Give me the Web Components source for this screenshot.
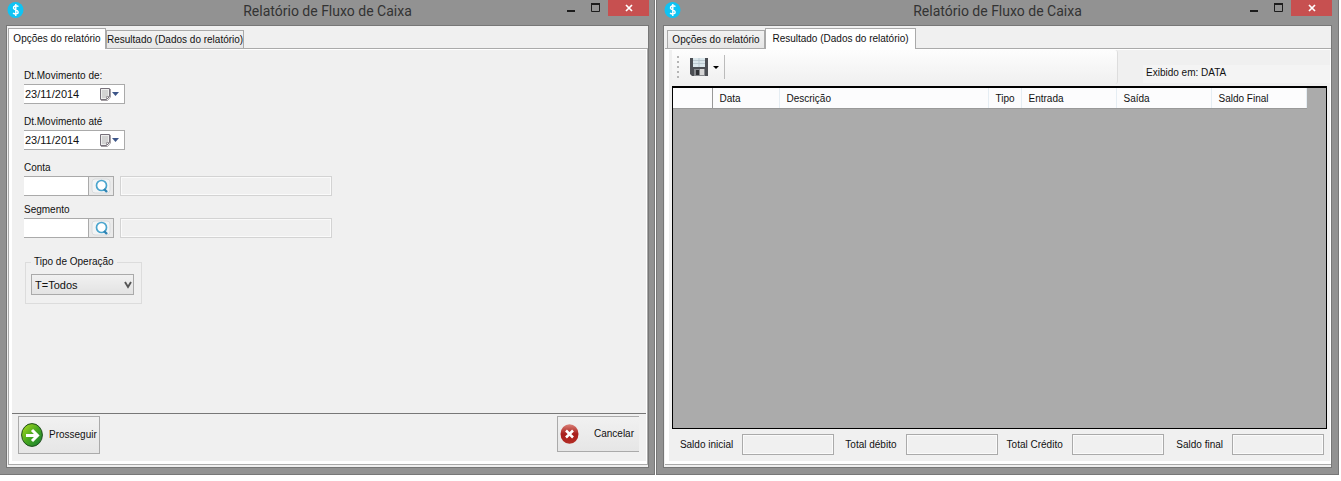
<!DOCTYPE html>
<html lang="pt-BR">
<head>
<meta charset="utf-8">
<title>Relatório de Fluxo de Caixa</title>
<style>
  body {
    margin: 0; height: 100vh; box-sizing: border-box; padding: 0 2px 6px 0;
    display: grid; grid-template-columns: 655fr 683fr; gap: 1px; background: #fff; color: #111;
    font: 10px/14px "Liberation Sans", Arial, sans-serif;
  }
</style>
</head>
<body>
<app-window class="options" caption="Relatório de Fluxo de Caixa"><options-page></options-page></app-window>
<app-window class="result" caption="Relatório de Fluxo de Caixa"><result-page></result-page></app-window>

<script>
const base = `*{box-sizing:border-box} button,input,select{font:inherit;color:inherit;margin:0;border-radius:0;outline:0}`;
const define = (name, render) => customElements.define(name, class extends HTMLElement {
  constructor() { super(); this.attachShadow({ mode: 'open' }); }
  connectedCallback() {
    const t = document.createElement('template');
    t.innerHTML = `<style>${base}</style>` + render(this);
    this.shadowRoot.replaceChildren(t.content.cloneNode(true));
  }
});

/* Window frame with caption bar */
define('app-window', el => `
<style>
  :host{box-sizing:border-box;display:flex;flex-direction:column;min-width:0;background:#929292;border-right:1px solid #777;border-bottom:1px solid #777;padding:0 5px 6px 6px}
  :host(.result){border-left:1px solid #777;padding-right:6px}
  header{display:grid;grid-template-columns:1fr auto 1fr;height:25px;flex:none}
  .logo{display:block;width:18px;height:20px}
  h1{margin:0;font:400 14px/22px Roboto,"Open Sans",sans-serif;color:#333;white-space:nowrap}
  .controls{display:flex;justify-content:flex-end;height:16px}
  .controls button{width:25px;height:16px;border:0;padding:0;background:none;display:grid;place-items:center}
  .controls .close{width:41px;background:#c75050}
  main{flex:1;min-height:0;display:flex;border:1px solid #777;background:#f0f0f0}
  ::slotted(*){flex:1}
</style>
<header>
  <svg class="logo" viewBox="0 0 18 20"><circle cx="9.500" cy="10" r="8" fill="#0fc3f3"/><path d="M12.500 6.500C10 5 7 6 7.500 8.200c.5 1.800 4.500 1.500 4.700 3.800.2 2-3 2.700-5.200 1.200M9.800 4v12" fill="none" stroke="#fff" stroke-width="1.400"/></svg>
  <h1>${el.getAttribute('caption')}</h1>
  <div class="controls">
    <button aria-label="Minimizar"><svg width="10" height="12"><path d="M1 8h8v2H1z" fill="#1c1c1c"/></svg></button>
    <button aria-label="Maximizar"><svg width="10" height="12"><path d="M.5 2v7.500h8V2z" fill="none" stroke="#1c1c1c"/><path d="M0 1h9v2H0z" fill="#1c1c1c"/></svg></button>
    <button class="close" aria-label="Fechar"><svg width="8" height="8"><path d="M1 1l6 6M7 1L1 7" stroke="#fff" stroke-width="1.700"/></svg></button>
  </div>
</header>
<main><slot></slot></main>`);

/* Tab strip over a bordered page */
define('tab-view', el => {
  const active = +el.getAttribute('active');
  return `
<style>
  :host{display:flex;flex-direction:column;min-width:0;padding:2px 0 2px 1px}
  nav{display:flex;align-items:flex-end;height:20px;flex:none;padding-left:${active ? 2 : 0}px}
  button{height:18px;padding:0;border:1px solid #aaa;border-bottom:0;background:linear-gradient(#f2f2f2,#e6e6e6);line-height:18px;white-space:nowrap;width:98px;text-align:center}
  button:nth-child(2){width:138px}
  button.on{height:21px;background:#fff;margin-bottom:-1px;z-index:1}
  button.on:nth-child(2){width:151px}
  section{flex:1;min-height:0;display:flex;border:1px solid #aaa;background:#fff;padding:1px 1px 3px 3px}
  :host([active="1"]) section{border-left:0;border-right:0;padding-left:4px}
  .page{flex:1;min-width:0;display:flex;background:#f0f0f0}
  ::slotted(*){flex:1;min-width:0}
</style>
<nav role="tablist">${['Opções do relatório', 'Resultado (Dados do relatório)'].map((t, i) =>
  `<button role="tab" aria-selected="${i === active}" class="${i === active ? 'on' : ''}">${t}</button>`).join('')}</nav>
<section><div class="page"><slot></slot></div></section>`;
});

/* Date box with calendar drop-down */
define('date-field', el => `
<style>
  :host{display:block}
  label{display:block;white-space:nowrap;line-height:16px}
  .box{display:flex;width:101px;height:20px;border:1px solid #aaa;border-left:0;background:#fff}
  input{flex:1;min-width:0;border:0;padding:0 0 0 1px;background:none;font-size:11px}
  button{width:26px;border:0;padding:0;background:none;display:flex;align-items:center}
</style>
<label for="d">${el.getAttribute('label')}</label>
<div class="box"><input id="d" value="${el.getAttribute('value')}">
<button aria-label="Abrir calendário"><svg width="26" height="14"><path d="M2.500 1.500h9v8l-3 3h-6z" fill="#eee" stroke="#77717a"/><path d="M4 4h6M4 6h6M4 8h6M4 10h4M5 3v8M7 3v8M9 3v6" stroke="#bbb" stroke-width=".6"/><path d="M11.500 9.500h-3v3M12.500 2v8l-3 3.500H3" fill="none" stroke="#8b858c" stroke-width=".8"/><path d="M14 5h7l-3.500 4z" fill="#3d5689"/></svg></button></div>`);

/* Code box, search button and read-only description */
define('lookup-field', el => `
<style>
  :host{display:block}
  label{display:block;line-height:16px}
  .row{display:flex;height:20px}
  .code{width:64px;border:1px solid #aaa;border-width:1px 0;background:#fff;padding:0 2px}
  button{width:26px;padding:0;border:1px solid #aaa;background:#eaeaea;display:grid;place-items:center}
  .desc{width:212px;margin-left:6px;border:1px solid #d3d3d3;box-shadow:inset 0 0 0 1px #fafafa;background:#f0f0f0}
</style>
<label for="c">${el.getAttribute('label')}</label>
<div class="row"><input class="code" id="c">
<button aria-label="Pesquisar"><svg width="20" height="16"><rect x="1" y="1" width="18" height="14" rx="3" fill="#f2f4f5" stroke="#d9dcde"/><circle cx="10.500" cy="7.500" r="5" fill="#fff" stroke="#4aa5ce" stroke-width="1.700"/><path d="M13 11l3 3" stroke="#2f83b3" stroke-width="2.400"/></svg></button>
<input class="desc" readonly aria-label="Descrição"></div>`);

define('operation-group', () => `
<style>
  :host{display:block}
  fieldset{width:117px;height:49px;margin:0;padding:5px 5px 0;border:1px solid #dcdcdc;min-width:0}
  legend{padding:0 3px;white-space:nowrap}
  .pick{display:grid}
  select,svg{grid-area:1/1}
  select{appearance:none;width:103px;height:21px;padding:0 3px;border:1px solid #aaa;background:linear-gradient(#f1f1f1,#e3e3e3);font-size:11px}
  svg{justify-self:end;align-self:center;margin-right:4px;pointer-events:none}
</style>
<fieldset><legend>Tipo de Operação</legend>
<div class="pick"><select aria-label="Tipo de Operação"><option>T=Todos</option></select>
<svg width="8" height="8"><path d="M1 1l3 5 3-5" fill="none" stroke="#555" stroke-width="1.900"/></svg></div></fieldset>`);

define('options-page', () => `
<style>
  :host{display:flex;min-width:0}
  tab-view{flex:1}
  .panel{display:flex;flex-direction:column}
  form{flex:1;display:flex;flex-direction:column;align-items:flex-start;padding:18px 12px 0}
  date-field{margin-bottom:10px}
  lookup-field{margin-bottom:6px}
  operation-group{margin:11px 0 0 1px}
  footer{display:flex;justify-content:space-between;align-items:flex-start;height:48px;border-top:1px solid #777;padding:2px 7px 0 6px}
  button{display:flex;align-items:center;width:82px;height:38px;border:1px solid #aaa;background:linear-gradient(#f1f1f1,#e6e6e6);padding:0 2px;white-space:nowrap}
  .go{gap:6px}
  .cancel{height:36px;padding-right:5px;border-right:0;justify-content:space-between}
</style>
<tab-view active="0"><div class="panel">
<form>
  <date-field label="Dt.Movimento de:" value="23/11/2014"></date-field>
  <date-field label="Dt.Movimento até" value="23/11/2014"></date-field>
  <lookup-field label="Conta"></lookup-field>
  <lookup-field label="Segmento"></lookup-field>
  <operation-group></operation-group>
</form>
<footer>
  <button class="go"><svg width="22" height="24" viewBox="0 0 22 24" style="flex:none"><defs><linearGradient id="g" x1="0" y1="0" x2="1" y2="1"><stop offset="0" stop-color="#b4df1d"/><stop offset=".5" stop-color="#48a820"/><stop offset="1" stop-color="#127a35"/></linearGradient></defs><ellipse cx="11" cy="12" rx="10.400" ry="11.400" fill="url(#g)" stroke="#1d4c1a"/><path d="M5 12.500h10M11 7l5.500 5.500L11 18" fill="none" stroke="#fff" stroke-width="3"/></svg>Prosseguir</button>
  <button class="cancel"><svg width="19" height="20" viewBox="0 0 19 20"><defs><linearGradient id="r" x1="0" y1="0" x2="0" y2="1"><stop offset="0" stop-color="#db8178"/><stop offset=".5" stop-color="#a81f1c"/><stop offset="1" stop-color="#b32c24"/></linearGradient></defs><ellipse cx="9.500" cy="10" rx="9" ry="9.800" fill="url(#r)"/><path d="M6 6.500l7 7M13 6.500l-7 7" stroke="#fff" stroke-width="2.600"/></svg>Cancelar</button>
</footer></div></tab-view>`);

define('report-toolbar', () => `
<style>
  :host{display:flex;height:34px;flex:none}
  .bar{flex:1;display:flex;align-items:center;background:linear-gradient(#fdfdfd,#f0f0f0);border-right:1px solid #ddd;border-radius:0 3px 3px 0;padding-left:2px}
  button{border:0;padding:0;background:none;display:flex}
  .line{width:1px;height:24px;background:#bbb;margin-left:2px}
  .stamp{flex:0 0 212px;padding:15px 0 0 25px}
  .stamp span{display:block;background:#f4f4f4;padding:0 3px;line-height:16px;height:18px}
</style>
<div class="bar" role="toolbar">
<svg width="13" height="24" fill="#b5b5b5"><path d="M3 1h2v2H3zM3 6h2v2H3zM3 11h2v2H3zM3 16h2v2H3zM3 21h2v2H3z"/></svg>
<button aria-label="Salvar"><svg width="35" height="24"><path d="M3 3h18v18H5l-2-2z" fill="#4c4f54"/><path d="M6 3h12v9H6z" fill="#dbe7ec"/><path d="M6 5.500h12M6 8.500h12M12 3v9" stroke="#b4c3ca" stroke-width=".8"/><path d="M7 14h11v7H7z" fill="#85888c"/><path d="M13 14h4v6h-4z" fill="#d6d6d6"/><path d="M9 15h3v5H9z" fill="#303236"/><path d="M26 11h6l-3 3z" fill="#000"/></svg></button>
<span class="line"></span></div>
<div class="stamp"><span>Exibido em: DATA</span></div>`);

define('data-grid', () => `
<style>
  :host{display:block;flex:1;min-height:0;border:1px solid #000;border-top-width:2px;background:#ababab;overflow:hidden}
  table{border-collapse:collapse;table-layout:fixed;width:633px;background:#fcfcfd}
  th{height:20px;padding:2px 0 0 7px;border-right:1px solid #e5edf3;border-bottom:1px solid #999;text-align:left;font-weight:400}
  th:first-child{border-right-color:#999}
</style>
<table><colgroup>${[39, 67, 209, 33, 95, 95, 95].map(w => `<col style="width:${w}px">`).join('')}</colgroup>
<thead><tr>${['', 'Data', 'Descrição', 'Tipo', 'Entrada', 'Saída', 'Saldo Final'].map(t => `<th scope="col">${t}</th>`).join('')}</tr></thead></table>`);

define('total-field', el => `
<style>
  :host{display:flex;align-items:center;justify-content:flex-end;gap:9px;min-width:0}
  label{white-space:nowrap;line-height:16px}
  input{width:92px;height:21px;border:1px solid #aaa;background:#f0f0f0;box-shadow:inset 0 0 0 1px #fafafa}
</style>
<label for="t">${el.getAttribute('label')}</label><input id="t" readonly>`);

define('result-page', () => `
<style>
  :host{display:flex;min-width:0}
  tab-view{flex:1}
  .panel{display:flex;flex-direction:column;padding-left:3px}
  data-grid{margin:2px 3px 0 0}
  footer{flex:none;display:grid;grid-template-columns:158fr 155fr 158fr 152fr;gap:8px;padding:5px 6px 6px 4px}
</style>
<tab-view active="1"><div class="panel">
<report-toolbar></report-toolbar>
<data-grid></data-grid>
<footer><total-field label="Saldo inicial"></total-field><total-field label="Total débito"></total-field><total-field label="Total Crédito"></total-field><total-field label="Saldo final"></total-field></footer>
</div></tab-view>`);
</script>
</body>
</html>
